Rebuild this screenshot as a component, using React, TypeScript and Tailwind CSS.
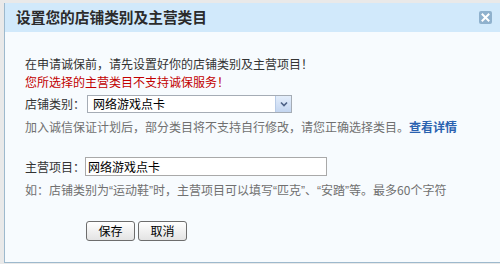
import React from "react";

const font = { fontFamily: '"Noto Sans CJK SC", "Liberation Sans", sans-serif' };

function Q({ children }: { children: React.ReactNode }) {
  return <span className="[font-family:'Liberation_Sans',sans-serif]">{children}</span>;
}

export default function App() {
  return (
    <div className="w-[500px] h-[264px] bg-[#e9e9e9] pt-[3px] pl-[4px] overflow-hidden" style={font}>
      <div className="h-[260px] flex flex-col bg-[#f7fbfe] border-l border-b border-[#9db9cd]">
        <div className="h-[29px] shrink-0 bg-[#d1e9fb] flex items-center justify-between pl-[11px] pr-[8px]">
          <span className="text-[14.7px] leading-none font-bold text-[#2b2b2b]">设置您的店铺类别及主营类目</span>
          <span className="w-[13px] h-[13px] rounded-[2px] bg-[#8fb1cd] flex items-center justify-center">
            <svg width="9" height="9" viewBox="0 0 9 9">
              <path d="M1.5 1.5 L7.5 7.5 M7.5 1.5 L1.5 7.5" stroke="#ffffff" strokeWidth="2" strokeLinecap="square" />
            </svg>
          </span>
        </div>
        <div className="flex flex-col pl-[20px] pt-[23px] text-[12px] text-[#333]">
          <div className="h-[18px] leading-[18px]">在申请诚保前，请先设置好你的店铺类别及主营项目！</div>
          <div className="h-[18px] leading-[18px] text-[#c20000]">您所选择的主营类目不支持诚保服务！</div>
          <div className="mt-[4px] h-[18px] flex items-center">
            <span className="w-[62px] leading-[18px]">店铺类别：</span>
            <div className="w-[205px] h-[18px] border border-[#a5acb5] bg-white flex items-center">
              <span className="flex-1 pl-[5px] text-[12px] leading-none text-black">网络游戏点卡</span>
              <span className="w-[16px] h-[16px] bg-gradient-to-b from-[#e4eefb] to-[#c3d5f0] border-l border-[#b8cbe6] flex items-center justify-center">
                <svg width="8" height="6" viewBox="0 0 8 6">
                  <path d="M1 1.5 L4 4.5 L7 1.5" stroke="#4d6185" strokeWidth="1.6" fill="none" />
                </svg>
              </span>
            </div>
          </div>
          <div className="mt-[5px] h-[18px] leading-[18px] text-[#707070]">
            加入诚信保证计划后，部分类目将不支持自行修改，请您正确选择类目。
            <span className="font-bold text-[#2a62b0]">查看详情</span>
          </div>
          <div className="mt-[21px] h-[19px] flex items-center">
            <span className="w-[60px] leading-[18px]">主营项目：</span>
            <div className="w-[242px] h-[19px] border border-[#a9a9a9] bg-white flex items-center pl-[2px] text-black leading-none">
              网络游戏点卡
            </div>
          </div>
          <div className="mt-[5px] h-[18px] leading-[18px] text-[#707070]">
            如：店铺类别为<Q>“</Q>运动鞋<Q>”</Q>时，主营项目可以填写<Q>“</Q>匹克<Q>”</Q>、<Q>“</Q>安踏<Q>”</Q>等。最多60个字符
          </div>
          <div className="mt-[22px] flex gap-[3px] pl-[61px]">
            <button className="w-[49px] h-[20px] rounded-[3px] border border-[#6d6d6d] bg-gradient-to-b from-white to-[#e3e3e3] text-[12px] leading-none text-black">保存</button>
            <button className="w-[49px] h-[20px] rounded-[3px] border border-[#6d6d6d] bg-gradient-to-b from-white to-[#e3e3e3] text-[12px] leading-none text-black">取消</button>
          </div>
        </div>
      </div>
    </div>
  );
}
